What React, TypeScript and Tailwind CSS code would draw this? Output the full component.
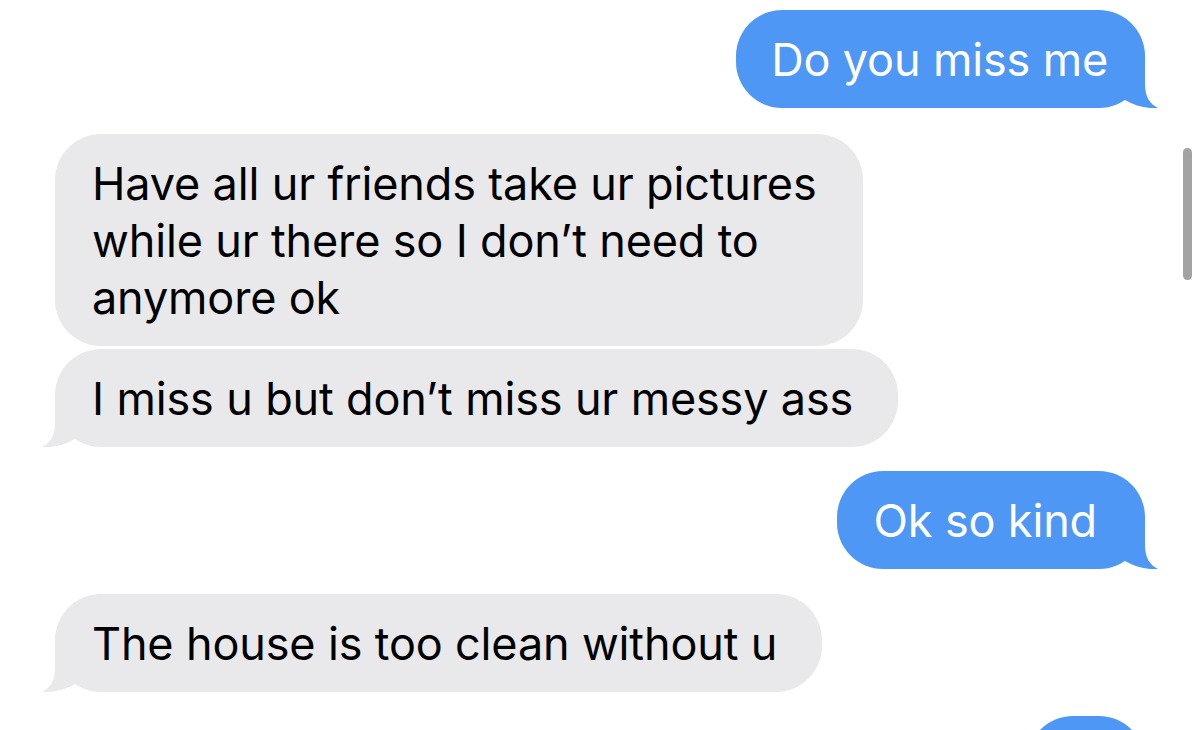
import React from "react";

function Tail({ side, color }: { side: "left" | "right"; color: string }) {
  const pos =
    side === "right"
      ? "absolute bottom-0 right-[-13px]"
      : "absolute bottom-0 left-[-13px] -scale-x-100";
  return (
    <svg
      className={pos}
      width="53"
      height="48"
      viewBox="0 0 53 48"
      aria-hidden="true"
    >
      <path
        d="M40 2 L40 24 C40 37 45 44 53 48 C43 49 30 46 20 40 L4 20 L4 2 Z"
        fill={color}
      />
    </svg>
  );
}

function Bubble({
  side,
  children,
  tail = true,
  className = "",
}: {
  side: "left" | "right";
  children?: React.ReactNode;
  tail?: boolean;
  className?: string;
}) {
  const isRight = side === "right";
  return (
    <div className={`flex ${isRight ? "justify-end" : "justify-start"}`}>
      <div
        className={`relative rounded-[46px] py-[20.5px] text-[45px] leading-[57px] tracking-[-0.15px] ${
          isRight ? "bg-[#4f97f5] text-white" : "bg-[#e9e9eb] text-black"
        } ${className}`}
      >
        {tail && (
          <Tail side={side} color={isRight ? "#4f97f5" : "#e9e9eb"} />
        )}
        <div className="relative">{children}</div>
      </div>
    </div>
  );
}

export default function App() {
  return (
    <div
      className="relative h-[730px] w-[1200px] overflow-hidden bg-white"
      style={{ fontFamily: "Inter, 'Noto Sans', sans-serif" }}
    >
      <div className="flex flex-col px-[55px] pt-[10px]">
        <Bubble side="right" className="pl-[35px] pr-[37px]">
          Do you miss me
        </Bubble>
        <div className="mt-[26px]">
          <Bubble side="left" tail={false} className="w-[808px] pl-[37px] pr-[37px]">
            Have all ur friends take ur pictures while ur there so I don’t need to anymore ok
          </Bubble>
        </div>
        <div className="mt-[3px]">
          <Bubble side="left" className="pl-[37px] pr-[45px]">
            I miss u but don’t miss ur messy ass
          </Bubble>
        </div>
        <div className="mt-[24px]">
          <Bubble side="right" className="pl-[37px] pr-[48px]">
            Ok so kind
          </Bubble>
        </div>
        <div className="mt-[25px]">
          <Bubble side="left" className="pl-[37px] pr-[45px]">
            The house is too clean without u
          </Bubble>
        </div>
        <div className="mt-[24px]">
          <Bubble side="right" className="w-[118px]">
            &nbsp;
          </Bubble>
        </div>
      </div>
      <div className="absolute left-[1183px] top-[148px] h-[132px] w-[9px] rounded-full bg-[#a3a3a3]" />
    </div>
  );
}
